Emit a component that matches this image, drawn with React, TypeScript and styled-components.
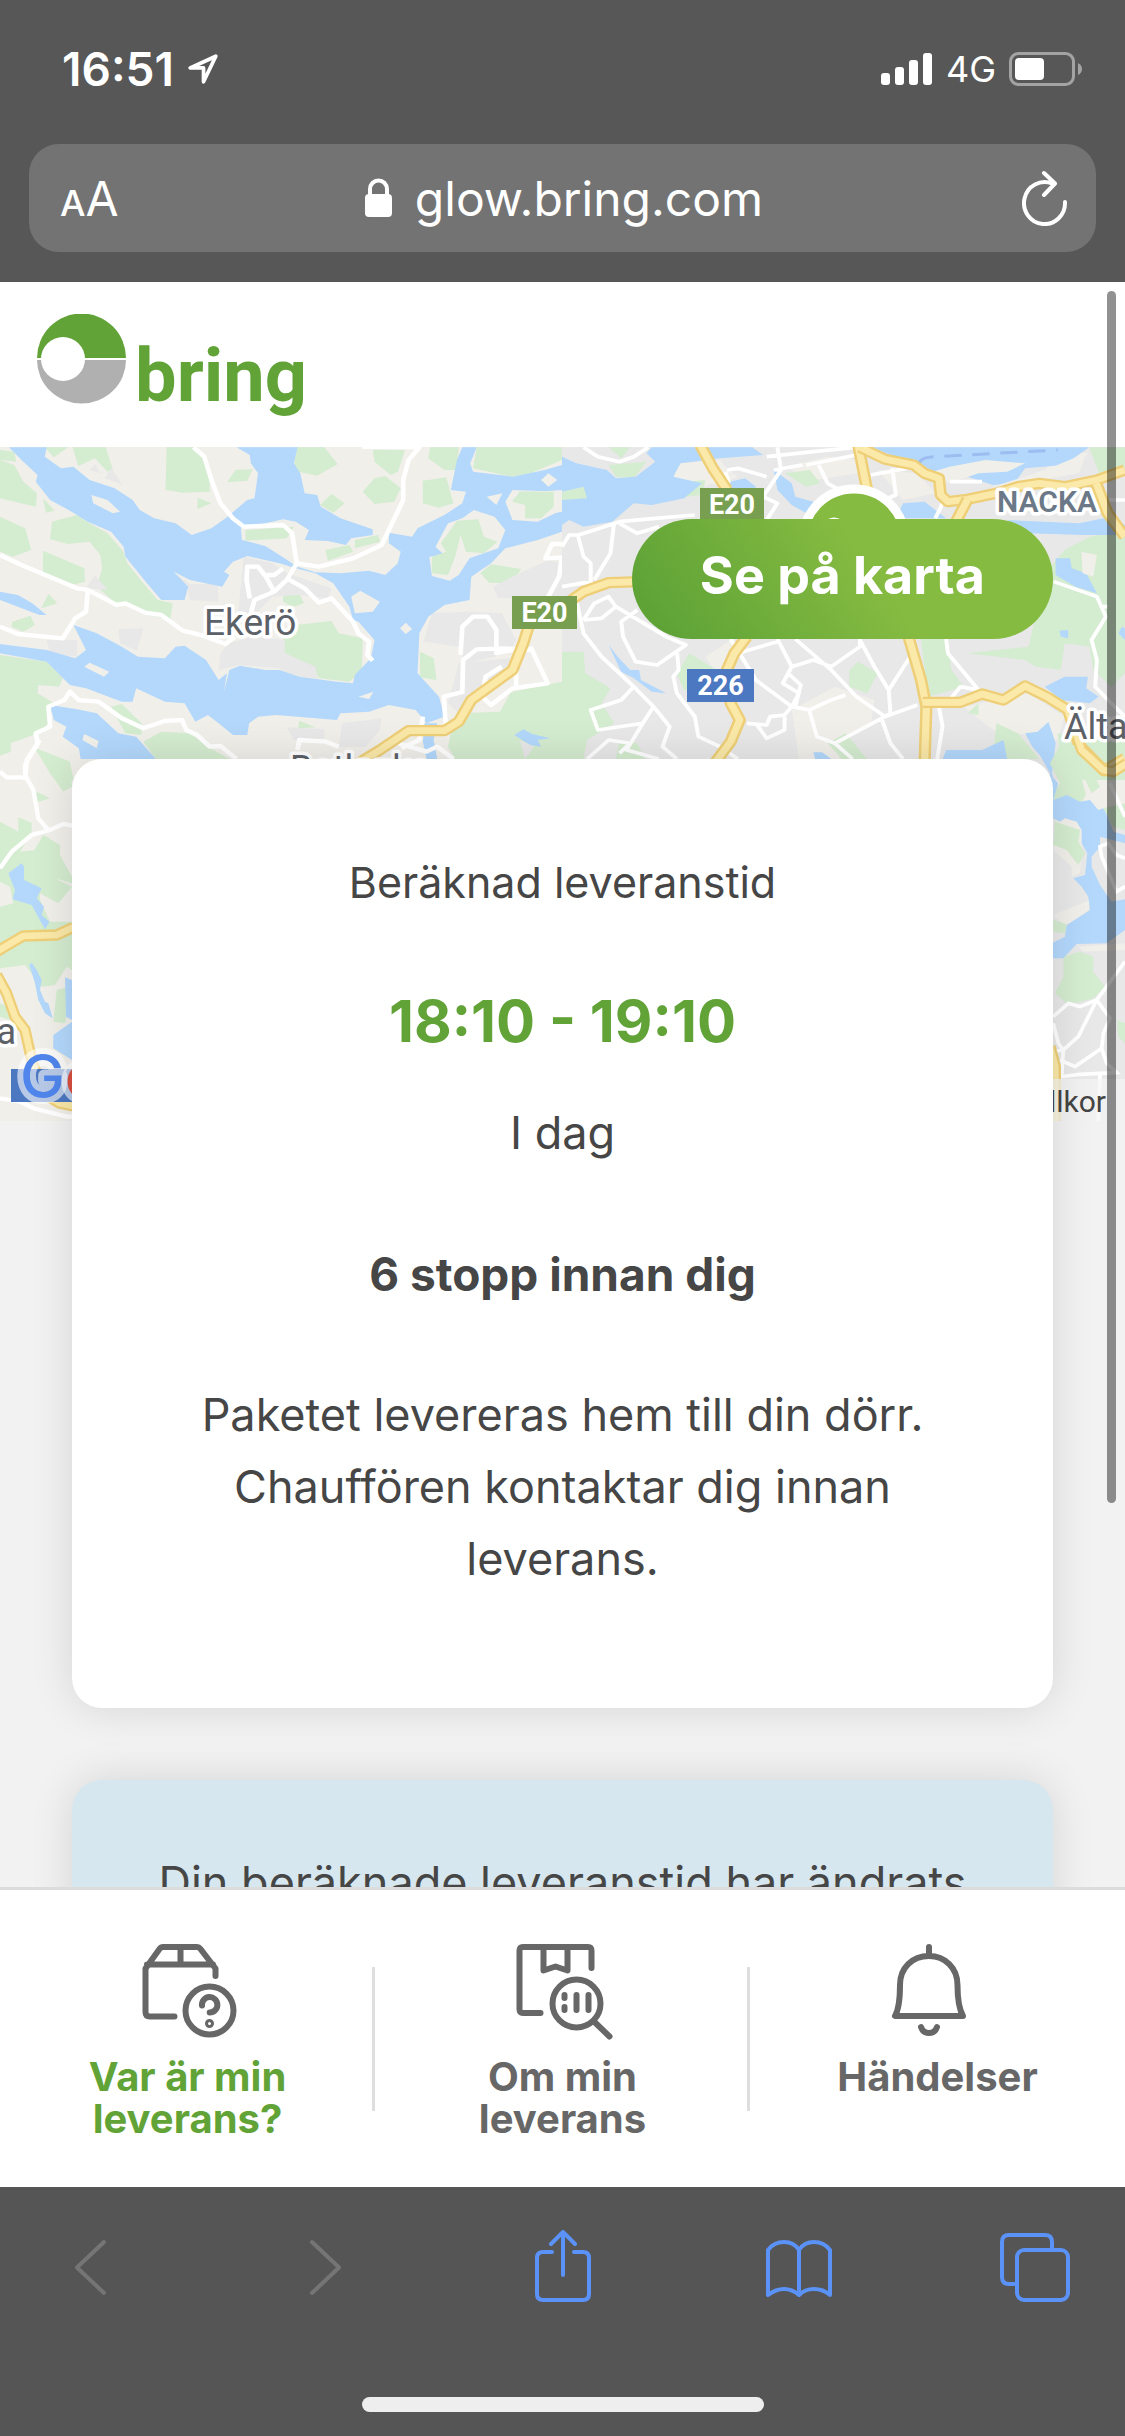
// src/App.tsx
import styled, { createGlobalStyle } from 'styled-components'

const UI_FONT = `Inter, 'Liberation Sans', sans-serif`
const MAP_FONT = `Roboto, 'Liberation Sans', sans-serif`

const GlobalStyle = createGlobalStyle`
  * {
    box-sizing: border-box;
  }

  body {
    margin: 0;
    background: #555;
    font-family: ${UI_FONT};
    color: #464646;
  }

  button, input {
    margin: 0;
    padding: 0;
    border: 0;
    background: none;
    color: inherit;
    font: inherit;
  }

  a {
    color: inherit;
    text-decoration: none;
  }

  p, h1, h2 {
    margin: 0;
  }

  svg {
    display: block;
    flex: none;
  }
`

const Screen = styled.div`
  display: flex;
  flex-direction: column;
  height: 100vh;
`

const BrowserTop = styled.header`
  flex: none;
  background: #575757;
  color: white;
  padding-bottom: 30px;
`

const StatusBar = styled.div`
  display: flex;
  align-items: center;
  justify-content: space-between;
  height: 144px;
  padding: 0 42px 6px 62px;
`

const StatusGroup = styled.div`
  display: flex;
  align-items: center;
  gap: 13px;
`

const Clock = styled.time`
  font-size: 46px;
  font-weight: 600;
`

const Network = styled.span`
  font-size: 36px;
`

const AddressBar = styled.div`
  display: grid;
  grid-template-columns: 1fr auto 1fr;
  align-items: center;
  height: 108px;
  margin: 0 29px;
  padding: 0 28px 0 31px;
  border-radius: 30px;
  background: #737373;
`

const TextSizeButton = styled.button`
  display: flex;
  align-items: baseline;
  font-size: 48px;

  small {
    font-size: 36px;
    font-weight: 500;
  }
`

const Address = styled.label`
  display: flex;
  align-items: center;
  gap: 22px;

  input {
    field-sizing: content;
    font-size: 48px;
  }
`

const ReloadButton = styled.button`
  justify-self: end;
`

const Content = styled.main`
  position: relative;
  flex: 1;
  min-height: 0;
  overflow: hidden;
  background: #f2f2f2;
`

const SiteHeader = styled.div`
  display: flex;
  align-items: center;
  height: 165px;
  padding: 0 36px 12px;
  background: white;
`

const Logo = styled.a`
  display: flex;
  align-items: center;
  gap: 8px;
  color: #62a338;
  font-family: ${MAP_FONT};
  font-size: 74px;
  font-weight: 700;
  line-height: 92px;

  span {
    padding-top: 34px;
  }
`

const MapArea = styled.section`
  position: relative;
  height: 674px;
  overflow: hidden;

  svg {
    width: 100%;
    height: 100%;
  }
`

const MapButton = styled.button`
  position: absolute;
  top: 72px;
  right: 72px;
  height: 120px;
  padding: 0 68px 8px;
  border-radius: 60px;
  background: linear-gradient(55deg, #5fa337 8%, #86bb41 58%);
  color: white;
  font-size: 52px;
  font-weight: 700;
`

const Cards = styled.div`
  position: relative;
  display: flex;
  flex-direction: column;
  gap: 72px;
  margin-top: -362px;
  padding: 0 72px;
`

const Card = styled.section<{ $tone?: 'notice' }>`
  padding: ${p => (p.$tone ? '67px 69px' : '87px 120px 113px')};
  border-radius: 30px;
  background: ${p => (p.$tone ? '#d7e7ef' : 'white')};
  box-shadow: 0 0 44px rgba(0, 0, 0, 0.12);
  text-align: center;
  font-size: 45px;
  line-height: 72px;
`

const CardTitle = styled.h1`
  font-size: 43px;
  font-weight: 400;
`

const DeliveryTime = styled.p`
  margin-top: 67px;
  color: #62a338;
  font-size: 58px;
  font-weight: 700;
`

const Day = styled.p`
  margin-top: 40px;
`

const Stops = styled.h2`
  margin-top: 69px;
  font-size: 46px;
  font-weight: 700;
`

const Note = styled.p`
  margin-top: 69px;
`

const ScrollThumb = styled.div`
  position: absolute;
  top: 9px;
  right: 9px;
  width: 9px;
  height: 1212px;
  border-radius: 5px;
  background: rgba(0, 0, 0, 0.43);
`

const TabBar = styled.nav`
  flex: none;
  display: grid;
  grid-template-columns: repeat(3, 1fr);
  height: 300px;
  border-top: 3px solid #dcdcdc;
  background: white;
`

const Tab = styled.a<{ $active?: boolean }>`
  position: relative;
  display: flex;
  flex-direction: column;
  align-items: center;
  gap: 16px;
  padding: 54px 60px 0;
  color: ${p => (p.$active ? '#62a338' : '#676767')};
  font-size: 40px;
  font-weight: 700;
  line-height: 42px;
  text-align: center;

  svg {
    color: #676767;
  }

  &:not(:last-child)::after {
    content: '';
    position: absolute;
    top: 77px;
    right: 0;
    width: 3px;
    height: 144px;
    background: #dedede;
  }
`

const BrowserBottom = styled.footer`
  flex: none;
  display: flex;
  flex-direction: column;
  align-items: center;
  justify-content: space-between;
  height: 249px;
  padding: 43px 45px 24px;
  background: #555;
`

const Toolbar = styled.div`
  display: flex;
  justify-content: space-between;
  width: 100%;
  color: #5b92f8;
`

const ToolButton = styled.button`
  &:disabled {
    color: #757575;
  }
`

const HomeIndicator = styled.div`
  width: 402px;
  height: 15px;
  border-radius: 8px;
  background: #eee;
`

const WATER = '#b3d8fc'
const LAND = '#f0efea'
const PARK = '#d4ecd0'
const URBAN = '#e8e8e8'

const stroke = {
  fill: 'none',
  stroke: 'currentColor',
  strokeLinecap: 'round',
  strokeLinejoin: 'round',
} as const

function Highway({ d }: { d: string }) {
  return (
    <>
      <path d={d} fill="none" stroke="#eecf78" strokeWidth="34" strokeLinejoin="round" />
      <path d={d} fill="none" stroke="#fbe9a9" strokeWidth="20" strokeLinejoin="round" />
    </>
  )
}

function RoadSign({ x, y, width, color, text }: { x: number; y: number; width: number; color: string; text: string }) {
  return (
    <g>
      <rect x={x} y={y} width={width} height="33" fill={color} />
      <text x={x + width / 2} y={y + 26} textAnchor="middle" fill="white" fontSize="27" fontWeight="700">
        {text}
      </text>
    </g>
  )
}

function WestMap() {
  return (
    <g transform="translate(0 -7) scale(.3584 .3333)">
      <g fill={PARK}>
        <path d="M0 30 40 35 45 65 0 60ZM0 60 40 75 65 125 103 160 100 200 0 175ZM125 22H190L150 52ZM203 22H295L315 90 300 95 265 55 218 78ZM465 22H550L585 100V155L510 158 462 150ZM120 175 152 212 128 218ZM145 245 215 225 250 250 300 280 345 335 355 370 400 430 440 480 482 490 475 540 400 520 350 490 325 492 270 440 285 385 280 345 250 305 190 312 140 298ZM0 230 70 265 87 330 35 350 0 335ZM120 332 235 385 237 425 200 435 120 395ZM135 462 160 490 115 505ZM35 545 85 527 97 555 65 575 32 560ZM0 645 130 665 175 715 165 740 107 735 105 760 150 790 135 850 105 880 30 910V935L0 947Z" />
        <path d="M657 90 705 88 690 122 633 127ZM552 173 590 190 550 207ZM825 22H905L942 72 885 107 820 92ZM925 162 962 190 930 218 893 195ZM1040 30H1130L1110 95 1090 105 1045 65ZM1012 155 1045 115 1075 108 1118 145 1100 185 1045 192ZM1180 122 1245 112 1265 190 1225 203 1180 190ZM1200 22H1280L1275 90 1240 90 1195 55ZM1330 22H1568V60L1480 100 1430 110 1320 85ZM1430 180 1450 155H1568V190L1510 235 1465 235V195ZM685 270 820 260 800 295 685 302ZM908 330 975 315 985 335 915 362ZM990 300 1055 285 1060 305 990 325ZM1340 400 1370 373 1455 387 1425 430 1365 428ZM790 462 835 460 848 490 815 502 790 485ZM790 590 825 555 925 543 945 580 1012 595 1010 690 975 725 890 715 875 685 795 640ZM1172 635 1210 655 1218 720 1172 712ZM180 608 197 640 160 640ZM310 800 340 792 395 850V885L350 880ZM400 905 450 875 530 880 580 920 640 957H435ZM100 925 195 965 205 1020 165 1020ZM835 842 880 862 832 865ZM1280 820 1395 815 1425 757 1568 725V957H1270L1250 920 1260 870Z" />
      </g>
      <g fill={URBAN}>
        <path d="M265 405 300 450 240 445ZM310 85 343 135 292 115ZM265 72 280 100 250 90ZM680 350 760 370 800 400 925 445 915 475 830 465 760 470 715 520 665 515ZM485 398 530 432 607 432 610 485 530 480 520 435ZM640 610 700 590 795 600V640L880 680 887 718 810 705 780 685 670 675 610 690 615 640ZM330 568 400 565 382 632 335 610ZM130 600H215V650L140 640ZM1045 545 1105 530 1090 580 1050 595ZM1205 520 1300 515 1400 520 1440 600 1420 640 1300 670 1280 620 1182 605ZM1280 670 1420 655 1440 690 1360 760 1290 830 1250 790ZM1375 440 1450 400 1530 360 1568 370V470L1390 475ZM800 862 905 868V895L820 900ZM955 850 1065 835 1060 870 1020 920H945ZM1450 900 1490 920 1465 957Z" />
      </g>
      <path
        fill={WATER}
        d="M25 22H130L125 50 170 85 205 80 250 120 320 145 370 180 390 210 430 235 490 250 535 285 590 265 635 230 690 180 710 175 720 100 700 70 697 45 660 22H830L820 70 838 100 850 160 885 165 895 200 950 235 1040 268V285L980 295 965 315 915 303 850 300 862 270 825 245 790 238 740 250 672 265 675 300 740 318 780 345 830 380 880 397 950 400 1030 392 1075 405 1110 370 1118 335 1085 310V278L1150 290 1165 265 1240 225 1290 190 1300 155 1258 150 1275 60 1290 22H1330L1312 70 1320 95 1430 110 1520 90 1568 75V155L1430 150 1410 185 1430 240 1568 215V275L1500 300 1410 325 1370 370 1315 410 1310 480 1240 495 1195 530 1170 580 1165 700 1225 770 1240 830 1190 850 1160 810 1085 795 1030 815 950 820 940 840 770 825 720 830 695 850 690 885 650 885 610 850 580 825 545 845 515 790 460 785 380 745 370 785 340 785 240 745 195 735 130 665 0 640V612L130 630 210 655 240 630 205 555 270 580 340 620 385 650 460 655 490 620 515 617 575 660 610 720 633 700 625 755 640 690 670 677 740 690 780 690 835 710 940 725 985 730 990 705 1035 655 1045 600 1000 545 985 540 975 500 930 430 880 400 825 385 780 370 690 348 650 365 625 395 640 405 620 440 530 420 485 395 525 440 515 480 450 480 410 430 350 350 345 320 310 275 245 245 200 215 140 180 100 125 105 105 60 60Z"
      />
      <path
        fill={WATER}
        d="M140 795 215 808 270 820 330 880 380 890 435 957H225L220 925 175 890 185 860 150 840ZM0 455 50 465 90 490 130 525H110L50 500 0 480ZM1435 885 1460 868 1485 882 1535 895 1500 900 1510 920 1480 915 1465 905ZM1185 850H1220L1210 900 1220 957H1190L1180 905Z"
      />
      <path
        fill={LAND}
        d="M255 165 300 180 335 215 315 220 260 190ZM235 680 250 668 305 695 290 710ZM1000 770 1042 755 1030 777ZM1358 170 1402 160 1385 195ZM1510 120 1530 100 1555 120 1530 140ZM1116 565 1132 548 1150 567 1132 582ZM230 900 235 882 275 903 270 925ZM1430 200 1440 160 1568 150V210L1500 245 1430 240ZM980 470 1005 452 1060 485 1040 515 990 520ZM1198 350 1240 345 1215 320 1250 250 1290 235 1322 210 1380 230 1410 270 1390 325 1310 355 1280 405 1255 422 1205 408Z"
      />
      <path fill={PARK} d="M1205 350 1245 335 1230 310 1275 242 1335 238 1350 290 1388 305 1350 340 1300 335 1285 285 1270 350 1250 405 1205 400ZM1430 185 1450 155H1545V200L1510 235 1465 235V195Z" />
      <g fill="none" stroke="white" strokeWidth="13" strokeLinejoin="round">
        <path d="M540 22 570 50 590 120 615 190 650 235 680 260 790 255 815 280 828 370 800 420 765 455 710 480 700 520M828 370 890 380 985 355 1065 315 1125 180 1125 120 1140 60 1170 22 1010 20M0 345 60 375 215 445 245 450 325 495 350 490 405 518 450 525 510 572 560 585 630 612 655 590M245 450 240 515 210 535 175 595 50 582 0 560M800 415 850 445 890 488 925 475 985 545 1000 580 1030 605 1025 645 1040 662M765 455 742 410 720 380H690L688 420 697 475M745 405 765 405 790 385" />
        <path d="M70 1020 75 960 105 910 100 880 140 860 135 800 180 780 195 755 220 780 275 785 340 835 400 865 460 843 508 840 520 870 550 885 585 920 615 918 660 957M830 930 835 900 910 905 945 920M1085 890 1110 910 1190 935 1220 920 1265 957M1180 830 1170 900 1120 925M1290 755 1292 660 1330 628 1400 625 1480 630M1285 645 1290 560 1320 530 1360 530 1385 570 1385 640 1430 630M1480 620 1528 730 1430 745 1370 795 1345 770 1355 710 1400 680M1245 870 1238 770 1295 755M1440 745V650M1520 490 1560 410 1568 350M1568 312 1540 312 1522 355 1568 352" />
      </g>
      <Highway d="M1000 970 1060 930 1140 872 1240 872 1280 845 1315 780 1430 690 1460 610 1475 560" />
    </g>
  )
}

function EastMap() {
  return (
    <g transform="translate(562 -7) scale(.359 .3333)">
      <path fill={URBAN} d="M0 22H1568V1020H0Z" />
      <path
        fill={LAND}
        d="M330 70 440 60 470 100 400 140 300 130ZM620 80 740 50 840 60 830 100 700 120ZM880 90 990 100 1040 160 950 180ZM640 810 760 740 870 780 860 860 800 880 770 957H660ZM400 650 470 600 500 640 430 700ZM1120 800 1300 760 1400 830 1380 900 1200 870ZM1380 30 1460 40 1440 100 1330 120Z"
      />
      <path
        fill={PARK}
        d="M130 75 235 65 200 115 150 110ZM130 22H190L165 55ZM300 130 400 120 390 165 310 175ZM0 155 60 140 75 175 0 185ZM0 635 60 635 65 700 135 745 110 790 145 850 70 900 60 957H0ZM320 700 355 640 430 690 420 730 340 750ZM620 100 690 90 720 130 680 140ZM800 690 825 665 880 700 850 760 800 740ZM740 910 790 880 850 957H780ZM1000 597H1075L1085 690 1120 740 1020 770ZM1320 520 1330 420 1400 330 1470 290 1568 270V700L1530 740 1480 690 1470 620 1400 610 1390 690 1320 680 1290 660 1130 640 1300 620ZM1210 850 1270 880 1330 957H1200ZM1130 820 1160 790V825ZM1380 880 1470 900 1568 860V1020H1400ZM1468 22H1568V100L1500 110ZM160 900 210 910 230 957H150Z"
      />
      <path
        fill={WATER}
        d="M0 50 40 70 125 90 150 115 205 110 260 65 235 40 250 22H530L560 45 440 55 330 70 310 110 390 130 340 175 250 195 200 190 140 245 60 260 20 240 0 255V180L70 175 60 140 0 155ZM590 90 640 130 650 170 700 185 690 225 640 195 600 150ZM450 130 510 115 540 140 520 175 450 160ZM860 22H1468L1400 75 1290 85 1260 130 1200 135 1130 110 1040 120 990 85 930 50ZM950 190 1010 185 1070 235H930ZM1240 240 1440 250 1530 230 1568 255V285L1450 285 1300 280ZM1375 355 1415 355 1420 385 1460 400 1490 460 1430 440 1375 405ZM130 615 155 650 190 690 215 690 220 720 290 760 250 755 200 715 165 695ZM1345 740 1400 710 1465 710 1460 745 1495 770 1470 790 1390 780ZM1290 880 1325 875 1355 845 1375 910 1365 1000 1340 957 1310 920ZM1060 957 1070 930 1170 930 1230 900 1240 957ZM700 937H725L750 957H705ZM1385 572 1410 570V595L1390 590ZM1560 560 1568 565V600L1550 580Z"
      />
      <path
        fill={LAND}
        d="M1000 105 1080 80 1180 60 1290 70 1240 95 1160 100 1080 130ZM1200 140 1290 110 1380 75 1468 35 1420 95 1330 120ZM370 110 440 75 490 110 430 135ZM1447 335 1490 345 1480 410 1450 400Z"
      />
      <path d="M995 70Q1000 50 1040 50L1380 30" fill="none" stroke="#9dbcf0" strokeWidth="9" strokeDasharray="48 30" />
      <g fill="none" stroke="white" strokeWidth="11" strokeLinejoin="round">
        <path d="M60 22 100 50 160 65 200 50 240 22M600 22 610 90 560 170 600 190 570 240M570 50 700 35 820 22M590 90 670 75M680 75 820 45M715 75 740 130 790 160M460 90 490 85 570 110M455 95 465 130M370 225 260 235 160 245 90 270 45 285 20 285 0 320M45 290 60 350 80 370V425L0 440M145 250 135 340 90 420M160 250 210 280 270 260M860 105 960 85M920 85 930 165 870 190M1080 125 1170 125M1060 190 1040 235M1568 180H1490" />
        <path d="M40 480 60 580 110 650 200 740 255 800 300 860 280 920 320 957M60 540 110 535 150 500 130 470 90 490 60 540M150 500 290 590 345 615 265 675 205 665 170 590 165 545 210 510M320 630 325 690 310 710 320 760 370 830 380 890 440 920 490 957M255 800 225 850 100 870 80 810 165 780 200 740M160 940 190 910 130 900 70 957M225 850 180 930 270 957M470 597 540 720 590 760 640 800 690 810 750 780 790 765M600 597 640 680 700 660 750 680 830 620 830 597M650 597 750 690 820 770 900 830 990 795M640 680 615 730 660 760 640 800 620 825 580 830 570 855 515 850M620 830V870L570 895 540 850M830 600 870 680 910 750 970 650M910 750 915 820 890 835 915 910 950 957M690 815 710 890 760 910 890 835M760 910 810 957M630 700 665 735 650 800M490 640 600 605" />
        <path d="M1070 597 1075 640 1160 750 1110 740 1080 780 1050 800 1060 860 1045 957M1370 425 1490 470 1515 530 1475 600 1490 660 1485 740 1530 790 1568 830M1500 500 1520 500" />
      </g>
      <Highway d="M385 15 420 85 460 150" />
      <Highway d="M825 15 850 150" />
      <Highway d="M830 22 900 58 980 75 1010 100 1050 115 1055 165 1075 185 1130 178 1210 160 1270 140 1330 130 1400 140 1490 120 1568 90" />
      <Highway d="M1130 178 1090 260" />
      <Highway d="M1488 130 1520 220 1568 290" />
      <Highway d="M0 500 60 455 130 428 220 425" />
      <Highway d="M515 590 480 640 455 700 470 790 495 840 470 905 425 970" />
      <Highway d="M965 590 1000 720 1015 800 1010 970" />
      <Highway d="M1005 787 1110 787 1170 762 1230 780 1290 738 1350 770 1410 810 1440 915 1510 992 1568 955" />
    </g>
  )
}

function SouthMap() {
  return (
    <>
      <g transform="translate(0 293) scale(.3333)">
        <path
          fill={PARK}
          d="M105 25 210 65 216 140 190 155 150 100ZM110 155 150 175 110 187ZM0 245 55 275V232L95 248V280L60 335 110 330 175 420 216 440 175 490 120 460V480L150 545 216 545V690L200 680 165 735 125 740 75 675 0 685V540L30 545 60 510 100 530 75 570 60 600 0 620V500L40 490 30 440 0 425ZM130 285 180 315V345L216 410V430L150 410 100 335ZM170 750 205 740V800L195 850 160 845ZM0 790 50 810 30 840 0 830Z"
        />
        <path
          fill={WATER}
          d="M25 400 65 370 72 380V420L125 445 110 475 132 500 125 525 148 545 135 568 95 495 38 478 45 450ZM88 675 95 668 110 690 125 720 120 750 135 785 145 790 158 835 135 820 115 780 105 730ZM195 712 216 720V840L198 830ZM160 885 216 845V960L160 925Z"
        />
        <g fill="none" stroke="white" strokeWidth="13">
          <path d="M120 0 75 75V105L100 150 115 235 145 270M0 95 20 112H75M0 385 35 335 95 285 150 270 190 252 220 258M0 1075 60 1085 100 1105 200 1130 216 1130" />
        </g>
        <Highway d="M-10 635 70 588 170 585 220 562" />
        <Highway d="M-10 705 20 760 45 830 75 870 95 960 130 1060 180 1090 220 1098" />
      </g>
      <g transform="translate(1000 293) scale(.3333)">
        <path fill={URBAN} d="M100 230H375V1145H100Z" />
        <path fill={LAND} d="M170 225 230 235 250 270 240 400 215 410 215 380 160 330ZM160 525 270 480 265 520 200 560ZM235 620 375 610V630L250 635ZM270 150 310 160 320 210 270 175Z" />
        <path
          fill={PARK}
          d="M180 15H230L300 140 275 160 235 75 258 165 245 185 150 180 180 130 150 70ZM310 205 375 190V270L340 260ZM165 245 240 270 235 305 255 340 235 375 200 330 160 315ZM160 540 200 553 195 580 160 575ZM190 650 240 635 280 650V695L315 740 280 775 205 795 165 760 190 710ZM350 840 375 850V910L355 890Z"
        />
        <path
          fill={WATER}
          d="M95 0H165L160 50 148 70 160 115 175 130 160 180 200 165 240 185 270 180 295 210 310 205 325 235 340 275 375 285V310L300 290 300 320 275 350V380L300 435 335 485 375 478V570L320 610 230 612 190 655H150V612L195 590 200 555 270 510 265 470 245 440 220 415 255 405 262 340 245 310V270L230 245 195 235 180 245 150 230V100Z"
        />
        <g fill="none" stroke="white" strokeWidth="11">
          <path d="M160 830 205 790 240 800 290 780 375 665M290 780 235 890 190 930 160 935M160 850 175 910 190 930 185 1010 240 1003 350 998 320 970 305 925 225 980 180 960M290 780 330 835 310 880 305 925M375 440 350 455 305 350 300 320 325 310 350 345 375 355M330 130 375 230M300 1005 295 1145" />
        </g>
        <Highway d="M228 -20 245 30 310 90 340 95 380 70" />
        <Highway d="M150 920 166 980 166 1145" />
      </g>
    </>
  )
}

function MapPicture() {
  return (
    <svg viewBox="0 0 1125 674" preserveAspectRatio="xMidYMin slice" fontFamily={MAP_FONT} role="img" aria-label="Karta">
      <path fill={LAND} d="M0 0H1125V674H0Z" />
      <WestMap />
      <EastMap />
      <SouthMap />
      <RoadSign x={512} y={149} width={65} color="#779f4f" text="E20" />
      <RoadSign x={700} y={41} width={64} color="#779f4f" text="E20" />
      <RoadSign x={687} y={222} width={67} color="#4b78c1" text="226" />
      <path fill="#4b78c1" d="M11 622H90V655H11Z" />
      <g fill="#5c6168" stroke="white" strokeWidth="7" strokeLinejoin="round" paintOrder="stroke" fontSize="36">
        <text x="204" y="188" fontSize="37">Ekerö</text>
        <text x="290" y="334">Botkyrka</text>
        <text x="1064" y="292">Älta</text>
        <text x="16" y="597" textAnchor="end">a</text>
        <text x="997" y="65" fontSize="30" fontWeight="600" fill="#6b7887">NACKA</text>
      </g>
      <path fill="#f5f5f5" opacity=".7" d="M900 632H1125V674H900Z" />
      <text x="1106" y="665" textAnchor="end" fill="#444" fontSize="30">Villkor</text>
      <text x="20" y="651" fontFamily={UI_FONT} fontSize="60" fontWeight="500" stroke="rgba(255,255,255,.6)" strokeWidth="12" strokeLinejoin="round" paintOrder="stroke">
        <tspan fill="#5086ec">G</tspan>
        <tspan fill="#d95040">o</tspan>
      </text>
      <circle cx="854" cy="93" r="51" fill="#86bb41" stroke="white" strokeWidth="9" />
      <path d="M828 72q6-3 12 0" fill="white" />
    </svg>
  )
}

function BringMark() {
  return (
    <svg width="91" height="90" viewBox="0 0 91 90">
      <path d="M1 44a44.500 44.500 0 0 1 89 0Z" fill="#62a338" />
      <path d="M1 46a44.500 43.500 0 0 0 89 0Z" fill="#b0b0b0" />
      <circle cx="27" cy="45" r="22" fill="white" />
    </svg>
  )
}

function BoxQuestionIcon() {
  return (
    <svg width="96" height="96" viewBox="0 0 96 96" overflow="visible" {...stroke} strokeWidth="6">
      <path d="M75.500 32V24.500L60.500 5Q59 3 57 3H23Q21 3 19.500 5L5.500 24.500V68Q5.500 72.500 10 72.500H34.500M7 20.500H73M40.500 3V20" />
      <circle cx="69.500" cy="66.500" r="24" />
      <path d="M62 61.500a7.700 7.700 0 1 1 7.700 7" />
      <circle cx="69.500" cy="79.500" r="1.500" />
    </svg>
  )
}

function BoxSearchIcon() {
  return (
    <svg width="96" height="96" viewBox="0 0 96 96" overflow="visible" {...stroke} strokeWidth="6">
      <path d="M25.500 69H8Q4.500 69 4.500 65V7Q4.500 3 8 3H73Q76.500 3 76.500 7V24M28.500 3V26.500L40.500 22.500 52.500 26.500V3" />
      <circle cx="61.500" cy="59.500" r="24" />
      <path d="M80 78.500 94.500 92.500M49.500 51v3M49.500 63v3M61.500 51V66M73.500 51V66" />
    </svg>
  )
}

function BellIcon() {
  return (
    <svg width="96" height="96" viewBox="0 0 96 96" {...stroke} strokeWidth="6">
      <path d="M39 3V11M39 12C22 12 10 24 10 41C10 55 9 65 5 72H73C69 65 67.500 55 67.500 41C67.500 24 55 12 39 12ZM31 83Q33 89 39 89T47 83" />
    </svg>
  )
}

export default function App() {
  return (
    <Screen>
      <GlobalStyle />
      <BrowserTop>
        <StatusBar>
          <StatusGroup>
            <Clock>16:51</Clock>
            <svg width="32" height="32" viewBox="0 0 30 30" {...stroke} strokeWidth="3.500">
              <path d="M27 3 3 14H15.500V27Z" />
            </svg>
          </StatusGroup>
          <StatusGroup>
            <svg width="52" height="34" viewBox="0 0 52 34" fill="white">
              <rect x="0" y="21" width="9" height="12" rx="3" />
              <rect x="14" y="15" width="9" height="18" rx="3" />
              <rect x="28" y="8" width="9" height="25" rx="3" />
              <rect x="42" y="1" width="9" height="32" rx="3" />
            </svg>
            <Network>4G</Network>
            <svg width="74" height="34" viewBox="0 0 74 34">
              <rect x="1.500" y="1.500" width="63" height="31" rx="8" fill="none" stroke="#a3a3a3" strokeWidth="3" />
              <rect x="6" y="6" width="29" height="22" rx="4" fill="white" />
              <path d="M69 11q4 2 4 6t-4 6Z" fill="#a3a3a3" />
            </svg>
          </StatusGroup>
        </StatusBar>
        <AddressBar>
          <TextSizeButton aria-label="Textstorlek">
            <small>A</small>
            <span>A</span>
          </TextSizeButton>
          <Address>
            <svg width="28" height="40" viewBox="0 0 28 40">
              <rect x="0" y="16" width="27" height="23" rx="4" fill="white" />
              <path d="M5 18V11a8.500 8.500 0 0 1 17 0V18" fill="none" stroke="white" strokeWidth="4" />
            </svg>
            <input type="text" aria-label="Adress" defaultValue="glow.bring.com" />
          </Address>
          <ReloadButton aria-label="Ladda om">
            <svg width="46" height="56" viewBox="0 0 46 56" {...stroke} strokeWidth="4">
              <path d="M43 32A20.500 21 0 1 1 30 13.500M22 3 33 13.500 22 25" />
            </svg>
          </ReloadButton>
        </AddressBar>
      </BrowserTop>

      <Content>
        <SiteHeader>
          <Logo href="#">
            <BringMark />
            <span>bring</span>
          </Logo>
        </SiteHeader>
        <MapArea>
          <MapPicture />
          <MapButton>Se på karta</MapButton>
        </MapArea>
        <Cards>
          <Card>
            <CardTitle>Beräknad leveranstid</CardTitle>
            <DeliveryTime>18:10 - 19:10</DeliveryTime>
            <Day>I dag</Day>
            <Stops>6 stopp innan dig</Stops>
            <Note>Paketet levereras hem till din dörr. Chauffören kontaktar dig innan leverans.</Note>
          </Card>
          <Card $tone="notice">
            <p>Din beräknade leveranstid har ändrats</p>
          </Card>
        </Cards>
        <ScrollThumb />
      </Content>

      <TabBar>
        <Tab href="#var" $active>
          <BoxQuestionIcon />
          Var är min leverans?
        </Tab>
        <Tab href="#om">
          <BoxSearchIcon />
          Om min leverans
        </Tab>
        <Tab href="#handelser">
          <BellIcon />
          Händelser
        </Tab>
      </TabBar>

      <BrowserBottom>
        <Toolbar>
          <ToolButton disabled aria-label="Bakåt">
            <svg width="90" height="74" viewBox="0 0 90 74" {...stroke} strokeWidth="4">
              <path d="M59 12 32 37.500 59 63" />
            </svg>
          </ToolButton>
          <ToolButton disabled aria-label="Framåt">
            <svg width="90" height="74" viewBox="0 0 90 74" {...stroke} strokeWidth="4">
              <path d="M31 12 58 37.500 31 63" />
            </svg>
          </ToolButton>
          <ToolButton aria-label="Dela">
            <svg width="90" height="74" viewBox="0 0 90 74" {...stroke} strokeWidth="4">
              <path d="M34 22H25Q19 22 19 28V64Q19 70 25 70H65Q71 70 71 64V28Q71 22 65 22H56M45 45V3M33 14 45 2 57 14" />
            </svg>
          </ToolButton>
          <ToolButton aria-label="Bokmärken">
            <svg width="90" height="74" viewBox="0 0 90 74" {...stroke} strokeWidth="4">
              <path d="M45 20V65Q38 59 30 59T14 65V20Q20 12 30 12T45 20Q50 12 60 12T76 20V65Q69 59 60 59T45 65" />
            </svg>
          </ToolButton>
          <ToolButton aria-label="Flikar">
            <svg width="90" height="74" viewBox="0 0 90 74" {...stroke} strokeWidth="4">
              <path d="M24 54H19Q12 54 12 47V12Q12 5 19 5H55Q62 5 62 12V18" />
              <rect x="27" y="20" width="51" height="50" rx="7" />
            </svg>
          </ToolButton>
        </Toolbar>
        <HomeIndicator />
      </BrowserBottom>
    </Screen>
  )
}
